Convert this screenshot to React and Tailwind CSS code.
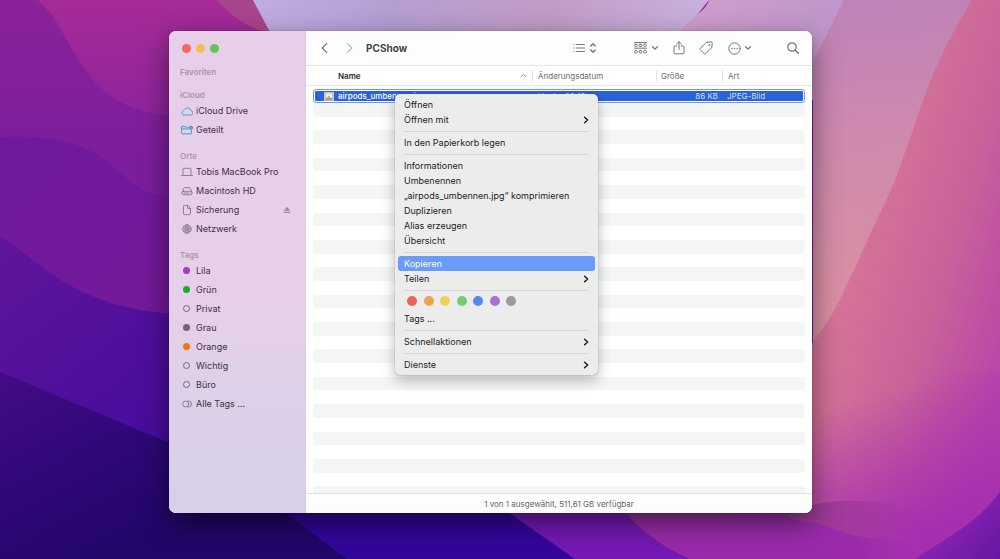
import React from 'react';

const Stroke = ({ children, className, width = 1, viewBox = '0 0 14 14' }) => (
    <svg viewBox={viewBox} className={className} fill="none" stroke="currentColor" strokeWidth={width} strokeLinecap="round" strokeLinejoin="round" aria-hidden="true">
        {children}
    </svg>
);

const ChevronDown = () => (
    <Stroke className="w-[6px] h-[6px]" viewBox="0 0 6 6" width={1.3}><path d="M.6 1.8 3 4.1l2.4-2.3" /></Stroke>
);

const CloudIcon = () => (
    <Stroke className="w-[12px] h-[12px] text-[#45a5cf]" viewBox="0 0 12 12">
        <path d="M2.800 10h6.600a2.200 2.200 0 0 0 .5-4.400A3.500 3.500 0 0 0 3.400 4.600 2.100 2.100 0 0 0 2 6.200 2 2 0 0 0 2.800 10Z" />
    </Stroke>
);

const SharedFolderIcon = () => (
    <svg viewBox="0 0 12 12" className="w-[12px] h-[12px]" fill="none" stroke="#3f9fc9" strokeLinejoin="round" aria-hidden="true">
        <path d="M7.4 3.3H5.1L4.3 2.4H1.2a.6.6 0 0 0-.6.6v6.2c0 .4.3.7.7.7h8.5c.4 0 .7-.3.7-.7V6.2M.6 4.9h7.1" />
        <circle cx="10" cy="3.7" r="2" fill="#2b97c6" stroke="none" />
        <path d="M10 2.9v1.7" stroke="#e8cfe9" strokeWidth=".7" />
    </svg>
);

const LaptopIcon = () => (
    <Stroke className="w-[12px] h-[12px]" viewBox="0 0 12 12" width={0.9}>
        <path d="M2 9V3c0-.4.3-.7.7-.7h6.6c.4 0 .7.3.7.7v6M.5 9.500h11" />
    </Stroke>
);

const DriveIcon = () => (
    <Stroke className="w-[12px] h-[12px]" viewBox="0 0 12 12" width={0.9}>
        <path d="M1.2 7 2.8 3.2c.2-.4.5-.6.9-.6h4.6c.4 0 .7.2.9.6L10.8 7" />
        <rect x="1.1" y="6.3" width="9.8" height="3.5" rx="1.4" />
        <path d="M3 8h4.5M9 8h.1" />
    </Stroke>
);

const DocumentIcon = () => (
    <Stroke className="w-[12px] h-[12px]" viewBox="0 0 12 12" width={0.9}>
        <path d="M6.6 1.4H3.4c-.5 0-.9.4-.9.9v7.5c0 .5.4.9.9.9h5.2c.5 0 .9-.4.9-.9V4.4L6.6 1.4V4c0 .3.2.5.5.5h2.4" />
    </Stroke>
);

const GlobeIcon = () => (
    <Stroke className="w-[12px] h-[12px]" viewBox="0 0 12 12" width={0.8}>
        <circle cx="6" cy="6" r="4.2" />
        <ellipse cx="6" cy="6" rx="2" ry="4.2" />
        <path d="M6 1.8v8.4M1.8 6h8.4M2.6 3.6c2 1 4.8 1 6.8 0M2.6 8.4c2-1 4.8-1 6.8 0" />
    </Stroke>
);

const AllTagsIcon = () => (
    <Stroke className="w-[12px] h-[12px]" viewBox="0 0 12 12" width={0.9}>
        <circle cx="4.7" cy="6" r="3" />
        <path d="M6.8 3h.7a3 3 0 0 1 0 6h-.7" />
    </Stroke>
);

const Dot = ({ className }) => <span className={`block w-[7px] h-[7px] rounded-full ${className}`} />;

const EMPTY = 'border border-[#75697b]';

const SECTIONS = [
    { title: 'Favoriten', items: [] },
    {
        title: 'iCloud',
        items: [
            { label: 'iCloud Drive', icon: <CloudIcon /> },
            { label: 'Geteilt', icon: <SharedFolderIcon /> },
        ],
    },
    {
        title: 'Orte',
        items: [
            { label: 'Tobis MacBook Pro', icon: <LaptopIcon /> },
            { label: 'Macintosh HD', icon: <DriveIcon /> },
            { label: 'Sicherung', icon: <DocumentIcon />, eject: true },
            { label: 'Netzwerk', icon: <GlobeIcon /> },
        ],
    },
    {
        title: 'Tags',
        items: [
            { label: 'Lila', icon: <Dot className="bg-[#a23bcf]" /> },
            { label: 'Grün', icon: <Dot className="bg-[#18ad32]" /> },
            { label: 'Privat', icon: <Dot className={EMPTY} /> },
            { label: 'Grau', icon: <Dot className="bg-[#6f6578]" /> },
            { label: 'Orange', icon: <Dot className="bg-[#e87a06]" /> },
            { label: 'Wichtig', icon: <Dot className={EMPTY} /> },
            { label: 'Büro', icon: <Dot className={EMPTY} /> },
            { label: 'Alle Tags ...', icon: <AllTagsIcon /> },
        ],
    },
];

const Wallpaper = () => (
    <svg viewBox="0 0 1000 559" preserveAspectRatio="none" className="absolute inset-0 w-full h-full" aria-hidden="true">
        <defs>
            <linearGradient id="base" x1="0" y1="0" x2="0" y2="1">
                <stop offset="0" stopColor="#8a2299" />
                <stop offset=".3" stopColor="#7c1d9c" />
            </linearGradient>
            <linearGradient id="magenta" x1="0" y1="0" x2="0" y2="1">
                <stop offset="0" stopColor="#a62b98" />
                <stop offset="1" stopColor="#8f249c" />
            </linearGradient>
            <linearGradient id="violet" x1="0" y1="0" x2="1" y2="1">
                <stop offset="0" stopColor="#6e199f" />
                <stop offset="1" stopColor="#741a98" />
            </linearGradient>
            <linearGradient id="indigo" gradientUnits="userSpaceOnUse" x1="20" y1="240" x2="200" y2="480">
                <stop offset="0" stopColor="#5e149b" />
                <stop offset="1" stopColor="#420a9c" />
            </linearGradient>
            <linearGradient id="navy" gradientUnits="userSpaceOnUse" x1="20" y1="370" x2="120" y2="559">
                <stop offset="0" stopColor="#430c84" />
                <stop offset=".5" stopColor="#2f0878" />
                <stop offset="1" stopColor="#220668" />
            </linearGradient>
            <linearGradient id="lavender" gradientUnits="userSpaceOnUse" x1="260" y1="0" x2="700" y2="0">
                <stop offset="0" stopColor="#c0abe1" />
                <stop offset=".3" stopColor="#b49ed2" />
                <stop offset=".65" stopColor="#c09bc4" />
                <stop offset="1" stopColor="#c8b0dc" />
            </linearGradient>
            <linearGradient id="lilac" gradientUnits="userSpaceOnUse" x1="690" y1="0" x2="840" y2="30">
                <stop offset="0" stopColor="#cf9dcb" />
                <stop offset="1" stopColor="#be96cb" />
            </linearGradient>
            <linearGradient id="mauve" gradientUnits="userSpaceOnUse" x1="830" y1="0" x2="860" y2="300">
                <stop offset="0" stopColor="#bd82b8" />
                <stop offset=".4" stopColor="#cc88af" />
                <stop offset="1" stopColor="#d98fa2" />
            </linearGradient>
            <linearGradient id="pink" gradientUnits="userSpaceOnUse" x1="840" y1="300" x2="1010" y2="350">
                <stop offset="0" stopColor="#d57398" />
                <stop offset=".5" stopColor="#c86399" />
                <stop offset="1" stopColor="#b946a8" />
            </linearGradient>
            <linearGradient id="fade" gradientUnits="userSpaceOnUse" x1="880" y1="390" x2="930" y2="530">
                <stop offset="0" stopColor="#a62fb0" stopOpacity="0" />
                <stop offset="1" stopColor="#a62fb0" />
            </linearGradient>
            <linearGradient id="wave" gradientUnits="userSpaceOnUse" x1="815" y1="0" x2="925" y2="0">
                <stop offset="0" stopColor="#9d3996" />
                <stop offset=".5" stopColor="#a338a0" stopOpacity=".8" />
                <stop offset="1" stopColor="#a731ae" stopOpacity="0" />
            </linearGradient>
            <linearGradient id="floor" gradientUnits="userSpaceOnUse" x1="780" y1="0" x2="915" y2="0">
                <stop offset="0" stopColor="#982ba8" />
                <stop offset=".6" stopColor="#9c2bab" />
                <stop offset="1" stopColor="#a02cb0" stopOpacity="0" />
            </linearGradient>
            <linearGradient id="corner" gradientUnits="userSpaceOnUse" x1="950" y1="510" x2="1000" y2="559">
                <stop offset="0" stopColor="#8d25b3" />
                <stop offset="1" stopColor="#6417a3" />
            </linearGradient>
        </defs>
        <rect width="1000" height="559" fill="url(#base)" />
        <path d="M38 0C78 35 75 105 169 116H300V0Z" fill="url(#magenta)" />
        <path d="M217 0C232 18 250 28 274 36V0Z" fill="#a9458c" />
        <path d="M0 137C20 135 60 138 78 145C125 163 120 190 172 198V330H0Z" fill="url(#violet)" />
        <path d="M0 236C50 270 75 305 172 314L500 480L600 559H0Z" fill="url(#indigo)" />
        <path d="M0 372L170 443L284 512L347 559H0Z" fill="url(#navy)" />
        <path d="M253 0L272 36H680L709 0Z" fill="url(#lavender)" />
        <path d="M709 0C704 14 692 14 680 32V100H813L844 0Z" fill="url(#lilac)" />
        <path d="M844 0L813 62V400L972 0Z" fill="url(#mauve)" />
        <path d="M972 0C935 60 925 95 912 133C900 165 897 180 880 213C868 238 858 262 849 280C838 305 826 330 790 370V559H1000V0Z" fill="url(#pink)" />
        <path d="M790 370H1000V559H790Z" fill="url(#fade)" />
        <path d="M240 480L284 512L347 559H600L508 512L460 480Z" fill="#33069a" />
        <path d="M460 480L508 512L575 559H790V480Z" fill="#7419b3" />
        <path d="M580 480L625 512C640 530 660 545 690 559H800V480Z" fill="#8f3390" />
        <path d="M790 510C815 504 835 500 855 501C880 501 905 506 925 514V559H790Z" fill="url(#wave)" />
        <path d="M630 516C690 522 725 514 760 513C790 513 790 522 815 523C838 528 845 540 915 541V559H690C665 547 645 535 630 516Z" fill="url(#floor)" />
        <path d="M1000 492C975 525 950 535 915 559H1000Z" fill="url(#corner)" />
    </svg>
);

const Sidebar = () => (
    <aside className="w-[137px] shrink-0 border-r border-[#dccbdd] bg-linear-to-b from-[#e8cfe9] from-55% via-[#ddd0e8] via-75% to-[#d8d0e8] pb-8">
        <div className="flex items-center gap-[5px] h-[35px] pl-[13px]">
            <button type="button" aria-label="Schließen" className="w-[9px] h-[9px] rounded-full bg-[#ed6b60]" />
            <button type="button" aria-label="Minimieren" className="w-[9px] h-[9px] rounded-full bg-[#f4be50]" />
            <button type="button" aria-label="Maximieren" className="w-[9px] h-[9px] rounded-full bg-[#61c655]" />
        </div>
        <nav className="flex flex-col gap-[11px]">
            {SECTIONS.map((section) => (
                <section key={section.title}>
                    <h2 className="pl-[11px] text-[8px] leading-[12px] font-semibold text-[#ab93af]">{section.title}</h2>
                    <ul>
                        {section.items.map((item) => (
                            <li key={item.label} className="flex items-center h-[19px] pl-[11px] pr-[14px]">
                                <a href="#" className="flex flex-1 items-center gap-1 text-[9px] text-[#3c3141]">
                                    <span className="flex justify-center w-[13px] -mr-px text-[#86778b]">{item.icon}</span>
                                    {item.label}
                                </a>
                                {item.eject && (
                                    <button type="button" aria-label="Auswerfen" className="text-[#9b889f]">
                                        <svg viewBox="0 0 8 8" className="w-[8px] h-[8px]" fill="currentColor"><path d="M4 .8 7.2 4.8H.8ZM.8 5.7h6.400v1.200H.8Z" /></svg>
                                    </button>
                                )}
                            </li>
                        ))}
                    </ul>
                </section>
            ))}
        </nav>
    </aside>
);

const Toolbar = () => (
    <header className="flex items-center h-[35px] shrink-0 pl-[13px] pr-[13px] bg-[#fdfdfd] border-b border-[#e6e6e6] text-[#757575]">
        <button type="button" aria-label="Zurück">
            <Stroke className="w-[12px] h-[12px]" viewBox="0 0 12 12" width={1.2}><path d="M7.800 1.300 3.200 6l4.600 4.700" /></Stroke>
        </button>
        <button type="button" aria-label="Vorwärts" className="ml-[12px] text-[#b9b9b9]">
            <Stroke className="w-[12px] h-[12px]" viewBox="0 0 12 12" width={1.2}><path d="M4.200 1.300 8.800 6l-4.600 4.700" /></Stroke>
        </button>
        <h1 className="ml-[11px] text-[10px] font-bold text-[#444]">PCShow</h1>
        <button type="button" aria-label="Darstellung" className="flex items-center gap-[5px] ml-auto">
            <Stroke className="w-[12px] h-[12px]" viewBox="0 0 12 12">
                <path d="M.8 2.500h.1M3.200 2.500h8.200M.8 6h.1M3.200 6h8.200M.8 9.500h.1M3.200 9.500h8.200" />
            </Stroke>
            <Stroke className="w-[6px] h-[12px]" viewBox="0 0 6 12" width={1.3}><path d="M.8 4 3 1.700 5.200 4M.8 8 3 10.300 5.200 8" /></Stroke>
        </button>
        <button type="button" aria-label="Gruppieren" className="flex items-center gap-[5px] ml-[38px]">
            <Stroke className="w-[13px] h-[12px]" viewBox="0 0 13 12" width={1}>
                <path d="M.5.600h12M.5 6.200h12" />
                <rect x=".7" y="2.300" width="2.600" height="2.200" rx=".8" />
                <rect x="5.200" y="2.300" width="2.600" height="2.200" rx=".8" />
                <rect x="9.700" y="2.300" width="2.600" height="2.200" rx=".8" />
                <rect x=".7" y="8.400" width="2.600" height="2.600" rx=".8" />
                <rect x="5.200" y="8.400" width="2.600" height="2.600" rx=".8" />
                <rect x="9.700" y="8.400" width="2.600" height="2.600" rx=".8" />
            </Stroke>
            <ChevronDown />
        </button>
        <button type="button" aria-label="Teilen" className="ml-[14px]">
            <Stroke className="w-[14px] h-[14px]"><path d="M4.800 5H2.900c-.5 0-.9.4-.9.9v6c0 .5.4.9.9.9h8.200c.5 0 .9-.4.9-.9v-6c0-.5-.4-.9-.9-.9H9.200M7 8.500V.8M4.700 3 7 .8 9.300 3" /></Stroke>
        </button>
        <button type="button" aria-label="Tags bearbeiten" className="ml-[13px]">
            <Stroke className="w-[14px] h-[14px]">
                <path d="M7.900 1.300 12 .9c.8 0 1.300.5 1.300 1.300L12.800 6c0 .4-.2.7-.5 1l-5.500 5.600c-.5.500-1.100.500-1.600 0L1.400 8.900c-.5-.5-.5-1.100 0-1.600l5.500-5.500c.3-.3.6-.5 1-.5Z" />
                <circle cx="10.300" cy="3.800" r=".4" />
            </Stroke>
        </button>
        <button type="button" aria-label="Aktionen" className="flex items-center gap-1 ml-[15px]">
            <Stroke className="w-[13px] h-[13px]" viewBox="0 0 13 13">
                <circle cx="6.500" cy="6.500" r="5.700" />
                <path d="M3.900 6.500h.1M6.500 6.500h.1M9.100 6.500h.1" strokeWidth="1.400" />
            </Stroke>
            <ChevronDown />
        </button>
        <button type="button" aria-label="Suchen" className="ml-[36px]">
            <Stroke className="w-[12px] h-[12px]" viewBox="0 0 12 12" width={1.2}><circle cx="5" cy="5" r="4.200" /><path d="m8.200 8.200 3.200 3.100" /></Stroke>
        </button>
    </header>
);

const COL_DATE = 'w-[124px] shrink-0 text-left';
const COL_SIZE = 'w-[66px] shrink-0';
const COL_KIND = 'w-[83px] shrink-0 text-left';

const FileTable = () => (
    <table className="flex flex-1 flex-col text-[8px]">
        <thead className="block shrink-0 border-b border-[#e6e6e6] mb-[3px]">
            <tr className="flex items-center h-[19px] px-[7px] text-[#6c6c6c]">
                <th className="flex flex-1 items-center justify-between pl-[25px] pr-[5px] font-semibold text-[#2b2b2b]">
                    Name
                    <Stroke className="w-[7px] h-[7px] text-[#8a8a8a]" viewBox="0 0 7 7" width={0.9}><path d="M1 4.800 3.500 2.300 6 4.800" /></Stroke>
                </th>
                <th className={`${COL_DATE} pl-[5px] border-l border-[#e2e2e2] font-normal`}>Änderungsdatum</th>
                <th className={`${COL_SIZE} pl-[4px] border-l border-[#e2e2e2] text-left font-normal`}>Größe</th>
                <th className={`${COL_KIND} pl-[5px] border-l border-[#e2e2e2] font-normal`}>Art</th>
            </tr>
        </thead>
        <tbody className="flex flex-1 flex-col px-[7px]">
            <tr className="flex h-[14px] shrink-0 items-center rounded-[3px] border border-[#6f95ee] p-px bg-[#2a62d9] bg-clip-content leading-[10px] text-[#d3dffa]">
                <td className="flex flex-1 items-center gap-1 pl-[9px] text-white font-medium">
                    <svg viewBox="0 0 10 9" className="w-[10px] h-[9px]" aria-hidden="true">
                        <rect width="10" height="9" fill="#c9c5c2" />
                        <rect x="2" y="1.500" width="6" height="5" rx="1" fill="#efedeb" />
                        <path d="M1 8.200h8L7.500 5.500h-5Z" fill="#a79a92" />
                        <circle cx="5" cy="4.700" r=".9" fill="#c98d74" />
                    </svg>
                    airpods_umbennen.jpg
                </td>
                <td className={`${COL_DATE} pl-[6px]`}>Heute, 22:13</td>
                <td className={`${COL_SIZE} pr-[4px] text-right`}>86 KB</td>
                <td className={`${COL_KIND} -mr-[2px] pl-[5px]`}>JPEG-Bild</td>
            </tr>
            {Array.from({ length: 28 }, (_, i) => (
                <tr key={i} className="flex-1 basis-0 rounded-[3px] odd:bg-white even:bg-[#f4f6f6]" aria-hidden="true" />
            ))}
            <tr className="flex-[0.5] basis-0 rounded-t-[3px] bg-[#f4f6f6]" aria-hidden="true" />
        </tbody>
    </table>
);

const MenuItem = ({ children, submenu, active }) => (
    <button
        type="button"
        role="menuitem"
        className={`flex items-center justify-between h-[15px] mx-[3px] px-[6px] rounded-[3px] text-left whitespace-nowrap ${active ? 'bg-[#689cf8] text-white' : 'text-[#1c1c1c]'}`}
    >
        {children}
        {submenu && (
            <Stroke className="w-[6px] h-[8px]" viewBox="0 0 6 8" width={1.5}><path d="M1.600 1.200 4.600 4 1.600 6.800" /></Stroke>
        )}
    </button>
);

const MenuSeparator = () => (
    <div role="separator" className="flex items-center h-[8px] mx-[9px]">
        <span className="flex-1 h-px bg-[#d6d6d6]" />
    </div>
);

const TAG_COLORS = [
    ['Rot', 'bg-[#e76459]'],
    ['Orange', 'bg-[#eca54c]'],
    ['Gelb', 'bg-[#efd157]'],
    ['Grün', 'bg-[#73cd6c]'],
    ['Blau', 'bg-[#4f8af2]'],
    ['Lila', 'bg-[#a971cf]'],
    ['Grau', 'bg-[#9a9a9e]'],
];

const ContextMenu = () => (
    <div role="menu" className="absolute left-[226px] top-[63px] flex flex-col w-[203px] py-[3px] rounded-[5px] bg-[#ececec] text-[9px] shadow-[0_0_1px_rgba(0,0,0,0.5),0_5px_14px_rgba(0,0,0,0.28)]">
        <MenuItem>Öffnen</MenuItem>
        <MenuItem submenu>Öffnen mit</MenuItem>
        <MenuSeparator />
        <MenuItem>In den Papierkorb legen</MenuItem>
        <MenuSeparator />
        <MenuItem>Informationen</MenuItem>
        <MenuItem>Umbenennen</MenuItem>
        <MenuItem>„airpods_umbennen.jpg“ komprimieren</MenuItem>
        <MenuItem>Duplizieren</MenuItem>
        <MenuItem>Alias erzeugen</MenuItem>
        <MenuItem>Übersicht</MenuItem>
        <MenuSeparator />
        <MenuItem active>Kopieren</MenuItem>
        <MenuItem submenu>Teilen</MenuItem>
        <MenuSeparator />
        <div className="flex items-center justify-between h-[17px] w-[109px] ml-[12px] pb-[3px]">
            {TAG_COLORS.map(([name, color]) => (
                <button key={name} type="button" aria-label={name} className={`w-[10px] h-[10px] rounded-full ${color}`} />
            ))}
        </div>
        <MenuItem>Tags ...</MenuItem>
        <MenuSeparator />
        <MenuItem submenu>Schnellaktionen</MenuItem>
        <MenuSeparator />
        <MenuItem submenu>Dienste</MenuItem>
    </div>
);

const App = () => (
    <main className="relative flex flex-col min-h-screen pt-[31px] pb-[46px] font-['Inter','Liberation_Sans',sans-serif]">
        <Wallpaper />
        <div className="relative flex flex-1 w-[64.3%] ml-[16.9%] rounded-[7px] shadow-[0_0_1px_rgba(0,0,0,0.6),0_10px_28px_rgba(0,0,0,0.5)]">
            <div className="flex flex-1 overflow-hidden rounded-[7px] bg-white">
                <Sidebar />
                <div className="flex flex-1 flex-col min-w-0">
                    <Toolbar />
                    <FileTable />
                    <footer className="flex items-center justify-center h-[20px] shrink-0 border-t border-[#e2e2e2] bg-[#fdfdfd] text-[8px] text-[#666]">
                        1 von 1 ausgewählt, 511,61 GB verfügbar
                    </footer>
                </div>
            </div>
            <ContextMenu />
        </div>
    </main>
);

export default App;
